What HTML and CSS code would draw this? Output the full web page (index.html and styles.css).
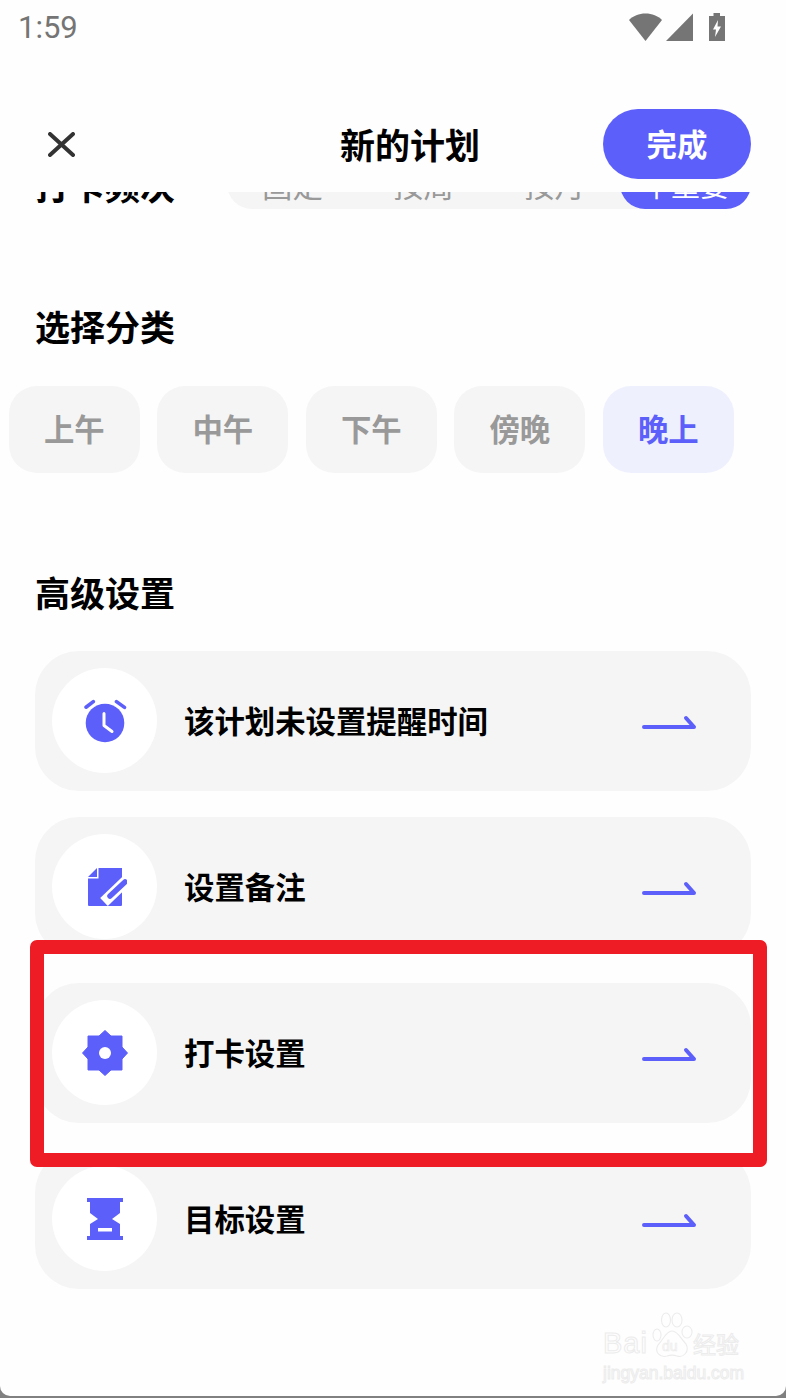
FILE: index.html
```html
<!DOCTYPE html>
<html>
<head>
    <meta charset="utf-8">
    <title>新的计划</title>
    <link rel="stylesheet" href="styles.css">
</head>
<body>
    <div class="screen">
        <div class="statusbar">
            <span class="time">1:59</span>
            <svg class="status-icons" width="100" height="30" viewBox="0 0 100 30">
                <path d="M1 7 C5 3 11 0.5 17.5 0.5 C24 0.5 30 3 34 7 L17.5 28 Z" fill="#757575"/>
                <path d="M65 0.5 V28 H38 Z" fill="#757575"/>
                <path d="M81 3 H85.5 V0 H92 V3 H97 V28 H81 Z" fill="#757575"/>
                <path d="M90 7 L85 16.5 H88 L87 24 L93 13.5 H89.5 Z" fill="#fff"/>
            </svg>
        </div>

        <header class="topbar">
            <svg class="close" width="27" height="25" viewBox="0 0 27 25">
                <path d="M2 2 L25 23 M25 2 L2 23" stroke="#333" stroke-width="4" stroke-linecap="round" fill="none"/>
            </svg>
            <h1 class="title">新的计划</h1>
            <button class="done">完成</button>
        </header>

        <main class="content">
            <div class="freq">
                <span class="freq-label">打卡频次</span>
                <div class="segment">
                    <span>固定</span>
                    <span>按周</span>
                    <span>按月</span>
                    <span class="segment-on">不重要</span>
                </div>
            </div>

            <h2 class="heading heading-cat">选择分类</h2>
            <div class="chips">
                <div class="chip">上午</div>
                <div class="chip">中午</div>
                <div class="chip">下午</div>
                <div class="chip">傍晚</div>
                <div class="chip chip-on">晚上</div>
            </div>

            <h2 class="heading heading-adv">高级设置</h2>
            <div class="rows">
                <div class="row">
                    <div class="row-icon">
                        <svg width="44" height="44" viewBox="0 0 44 44">
                            <circle cx="22" cy="24" r="19.3" fill="#5d5ffa"/>
                            <path d="M3 8.2 L10.3 2.6 M33.5 2.6 L41.5 8.4" stroke="#5d5ffa" stroke-width="3.6" stroke-linecap="round" fill="none"/>
                            <path d="M21 14.5 V26.5 L29 32.5" stroke="#fff" stroke-width="3" stroke-linecap="round" stroke-linejoin="round" fill="none"/>
                        </svg>
                    </div>
                    <span class="row-label">该计划未设置提醒时间</span>
                    <svg class="arrow" width="54" height="24" viewBox="0 0 54 24">
                        <path d="M2 18 H52 L44 9" stroke="#5d5ffa" stroke-width="4" stroke-linecap="round" stroke-linejoin="round" fill="none"/>
                    </svg>
                </div>
                <div class="row">
                    <div class="row-icon">
                        <svg width="44" height="44" viewBox="0 0 44 44">
                            <path d="M5 12 L14 3 V12 Z" fill="#5d5ffa"/>
                            <path d="M15.5 3 H39 V40 Q39 41 38 41 H6 Q5 41 5 40 V13.5 H15.5 Z" fill="#5d5ffa"/>
                            <path d="M21 37 L44 15" stroke="#fff" stroke-width="11" fill="none"/>
                            <path d="M27 31 L42 17" stroke="#5d5ffa" stroke-width="5.5" stroke-linecap="round" fill="none"/>
                        </svg>
                    </div>
                    <span class="row-label">设置备注</span>
                    <svg class="arrow" width="54" height="24" viewBox="0 0 54 24">
                        <path d="M2 18 H52 L44 9" stroke="#5d5ffa" stroke-width="4" stroke-linecap="round" stroke-linejoin="round" fill="none"/>
                    </svg>
                </div>
                <div class="row row-marked">
                    <div class="row-icon">
                        <svg width="46" height="46" viewBox="0 0 46 46">
                            <path d="M23 0.5 L29 6 H40 V17 L45.5 23 L40 29 V40 H29 L23 45.5 L17 40 H6 V29 L0.5 23 L6 17 V6 H17 Z" fill="#5d5ffa" stroke="#5d5ffa" stroke-linejoin="round"/>
                            <circle cx="23" cy="23" r="6" fill="#fff"/>
                        </svg>
                    </div>
                    <span class="row-label">打卡设置</span>
                    <svg class="arrow" width="54" height="24" viewBox="0 0 54 24">
                        <path d="M2 18 H52 L44 9" stroke="#5d5ffa" stroke-width="4" stroke-linecap="round" stroke-linejoin="round" fill="none"/>
                    </svg>
                </div>
                <div class="row">
                    <div class="row-icon">
                        <svg width="36" height="42" viewBox="0 0 36 42">
                            <path d="M0 0 H36 V4 H33 V15 L25 21 L33 26 V38 H36 V42 H0 V38 H3 V26 L11 21 L3 15 V4 H0 Z" fill="#5d5ffa"/>
                            <rect x="11" y="30" width="14" height="3.5" fill="#fff"/>
                        </svg>
                    </div>
                    <span class="row-label">目标设置</span>
                    <svg class="arrow" width="54" height="24" viewBox="0 0 54 24">
                        <path d="M2 18 H52 L44 9" stroke="#5d5ffa" stroke-width="4" stroke-linecap="round" stroke-linejoin="round" fill="none"/>
                    </svg>
                </div>
            </div>
        </main>

        <!-- annotation + watermark sit on top of the screenshot -->
        <div class="redbox-fill"></div>
        <div class="redbox"></div>
        <div class="watermark">
            <div class="wm-top">
                <span class="wm-bai">Bai</span>
                <svg class="wm-paw" width="41" height="46" viewBox="0 0 41 46">
                    <g fill="none" stroke="#ececec" stroke-width="1.1">
                        <ellipse cx="5" cy="23" rx="4" ry="6"/>
                        <ellipse cx="14" cy="8" rx="4.5" ry="7"/>
                        <ellipse cx="25" cy="8" rx="5" ry="7"/>
                        <ellipse cx="35" cy="20" rx="5" ry="6"/>
                        <path d="M20 19 C26 19 29 27 34 32 C38 40 31 46 25 44 C22 43 18 43 15 44 C8 46 2 40 6 33 C11 28 14 19 20 19 Z"/>
                    </g>
                    <text x="10" y="39" class="wm-du">du</text>
                </svg>
                <span class="wm-cn">经验</span>
            </div>
            <div class="wm-url">jingyan.baidu.com</div>
        </div>
    </div>
</body>
</html>
```

FILE: styles.css
```css
html, body {
    margin: 0;
    padding: 0;
    background-color: #808080;
}

.screen {
    position: relative;
    width: 786px;
    height: 1396px;
    background-color: #fefefe;
    border-radius: 0 0 10px 10px;
    display: flex;
    flex-direction: column;
    overflow: hidden;
    font-family: "Noto Sans CJK SC", "Liberation Sans", sans-serif;
}

.statusbar {
    height: 55px;
    flex-shrink: 0;
    display: flex;
    align-items: center;
    justify-content: space-between;
    padding: 0 58px 0 18px;
}

.time {
    font-family: Roboto, sans-serif;
    font-size: 31px;
    color: #757575;
}

.topbar {
    height: 137px;
    flex-shrink: 0;
    box-sizing: border-box;
    padding: 54px 35px 13px 48px;
    display: flex;
    align-items: center;
    background-color: #fefefe;
}

.close {
    flex-shrink: 0;
}

.title {
    margin: 0 123px 2px auto;
    font-size: 35px;
    font-weight: 700;
    color: #000;
}

.done {
    width: 148px;
    height: 70px;
    border: none;
    border-radius: 35px;
    padding: 0 0 2px;
    background-color: #5d5ffa;
    color: #fff;
    font-family: inherit;
    font-size: 30.4px;
    font-weight: 700;
}

.content {
    flex-grow: 1;
    overflow: hidden;
}

/* this row is scrolled partly under the header */
.freq {
    margin-top: -33px;
    height: 50px;
    display: flex;
    align-items: center;
    padding: 0 35px 0 35px;
}

.freq-label {
    width: 192px;
    font-size: 35px;
    font-weight: 700;
    color: #000;
}

.segment {
    flex-grow: 1;
    height: 50px;
    border-radius: 25px;
    background-color: #f5f5f5;
    display: flex;
    align-items: center;
    position: relative;
    padding-left: 35px;
    font-size: 30.4px;
    color: #999;
}

.segment span {
    width: 131px;
}

.segment .segment-on {
    position: absolute;
    right: 0;
    top: 0;
    width: 131px;
    height: 50px;
    line-height: 50px;
    border-radius: 25px;
    background-color: #5d5ffa;
    color: #fff;
    text-align: center;
    font-size: 29px;
}

.heading {
    margin: 0;
    height: 48px;
    line-height: 44px;
    padding-left: 35px;
    font-size: 35px;
    font-weight: 700;
    color: #000;
}

.heading-cat {
    margin-top: 95px;
}

.heading-adv {
    margin-top: 97px;
}

.chips {
    margin-top: 34px;
    padding-left: 8.8px;
    display: flex;
    gap: 17.5px;
}

.chip {
    width: 131px;
    height: 87px;
    line-height: 85px;
    border-radius: 28px;
    background-color: #f5f5f5;
    color: #999;
    text-align: center;
    font-size: 30.4px;
    font-weight: 700;
}

.chip-on {
    background-color: #eef0fd;
    color: #5d5ffa;
}

.rows {
    margin: 33px 35px 0 35px;
    display: flex;
    flex-direction: column;
    gap: 26px;
}

.row {
    height: 140px;
    box-sizing: border-box;
    padding: 0 55px 0 17px;
    border-radius: 44px;
    background-color: #f5f5f5;
    display: flex;
    align-items: center;
}

/* stays above the white fill of the red box */
.row-marked {
    position: relative;
    z-index: 2;
}

.row-icon {
    width: 105px;
    height: 105px;
    margin-bottom: 1px;
    flex-shrink: 0;
    border-radius: 50%;
    background-color: #fff;
    display: flex;
    align-items: center;
    justify-content: center;
}

.row-label {
    flex-grow: 1;
    margin-left: 27px;
    padding-bottom: 2px;
    font-size: 30.4px;
    font-weight: 700;
    color: #000;
}

.arrow {
    flex-shrink: 0;
}

.redbox,
.redbox-fill {
    position: absolute;
    left: 30px;
    top: 940px;
    width: 737px;
    height: 227px;
    box-sizing: border-box;
    border-radius: 7px;
}

.redbox-fill {
    z-index: 1;
    background-color: #fefefe;
}

.redbox {
    z-index: 3;
    border: 14px solid #ee1c25;
}

.watermark {
    position: absolute;
    left: 603px;
    top: 1312px;
    width: 142px;
    color: transparent;
    -webkit-text-stroke: 1px #ececec;
}

.wm-top {
    height: 46px;
    display: flex;
    align-items: flex-end;
}

.wm-bai {
    width: 49px;
    flex-shrink: 0;
    font-family: "Liberation Sans", sans-serif;
    font-size: 29px;
    line-height: 30px;
    letter-spacing: 1px;
}

.wm-paw {
    flex-shrink: 0;
}

.wm-du {
    font-family: "Liberation Sans", sans-serif;
    font-size: 14px;
    fill: transparent;
    stroke: #ececec;
    stroke-width: 0.7;
    -webkit-text-stroke: 0;
}

.wm-cn {
    flex-shrink: 0;
    font-size: 23px;
    line-height: 30px;
}

.wm-url {
    font-family: "Liberation Sans", sans-serif;
    font-size: 17.5px;
    line-height: 20px;
    margin-top: 5px;
    white-space: nowrap;
}
```
